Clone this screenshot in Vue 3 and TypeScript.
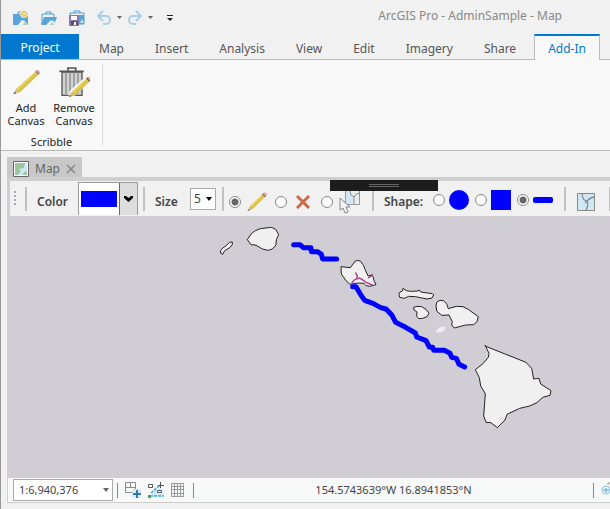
<script setup lang="ts">
import { ref } from 'vue'

const tabs: string[] = ['Map', 'Insert', 'Analysis', 'View', 'Edit', 'Imagery', 'Share', 'Add-In']
const activeTab = ref('Add-In')
const tool = ref('draw')
const shape = ref('line')
const size = ref('5')
const scale = ref('1:6,940,376')
</script>

<template>
  <div class="app">
    <header class="title-bar">
      <div class="quick">
        <button class="icon-btn" aria-label="New project">
          <svg width="16" height="16" viewBox="0 0 16 16">
            <path d="M5 4V2h5v2" fill="none" stroke="#4a9fd4" />
            <path d="M0 4h15v11H0z" fill="#57a5d8" />
            <path d="M5 15l4-5 3 1 3 4z" fill="#e8f3ee" /><path d="M10 15l2-4 3 4z" fill="#a9cfb4" />
            <circle cx="11" cy="4" r="4" fill="#f1f1f1" />
            <path d="M11 0v8M7 4h8M8 1l6 6M14 1L8 7" stroke="#dfc04c" />
            <circle cx="11" cy="4" r="2" fill="#f8ebac" stroke="#d9b740" />
          </svg>
        </button>
        <button class="icon-btn" aria-label="Open project">
          <svg width="16" height="16" viewBox="0 0 16 16">
            <path d="M5 4V2h5v2M1 14V4h12v3" fill="none" stroke="#4a9fd4" />
            <path d="M0 15L3 7h13l-3 8z" fill="#57a5d8" />
            <path d="M5 15l5-5 2 1 2 1-1 3z" fill="#e8f3ee" /><path d="M9 15l2-3 2 3z" fill="#a9cfb4" />
          </svg>
        </button>
        <button class="icon-btn" aria-label="Save project">
          <svg width="16" height="16" viewBox="0 0 16 16">
            <path d="M5 3V1h6v2M1 6V3h14v11h-5" fill="none" stroke="#4a9fd4" />
            <path d="M10 5h5v9h-5z" fill="#57a5d8" /><path d="M11 13l2-4 2 4z" fill="#c6e0c9" />
            <path d="M0 5h10v11H0z" fill="#8f73b5" />
            <path d="M2 6h6v4H2z" fill="#fff" /><path d="M2 11h7v4H2z" fill="#555" /><path d="M5 12h2v3H5z" fill="#fff" />
          </svg>
        </button>
        <button class="icon-btn wide" aria-label="Undo">
          <svg width="26" height="16" viewBox="0 0 26 16">
            <path d="M6 1L1 6l5 5M1 6h8a4 4 0 0 1 0 8H6" fill="none" stroke="#a9cfe8" stroke-width="2" />
            <path d="M20 6h5l-2.500 3z" fill="#666" />
          </svg>
        </button>
        <button class="icon-btn wide" aria-label="Redo">
          <svg width="26" height="16" viewBox="0 0 26 16">
            <path d="M8 1l5 5-5 5M13 6H5a4 4 0 0 0 0 8h3" fill="none" stroke="#a9cfe8" stroke-width="2" />
            <path d="M20 6h5l-2.500 3z" fill="#666" />
          </svg>
        </button>
        <button class="icon-btn customize" aria-label="Customize quick access">
          <svg width="6" height="8" viewBox="0 0 6 8"><path d="M0 1h6v1H0zM0 4h6L3 7z" fill="#222" /></svg>
        </button>
      </div>
      <div class="title">ArcGIS Pro - AdminSample - Map</div>
    </header>

    <nav class="tabs">
      <button class="project">Project</button>
      <button v-for="t in tabs" :key="t" class="tab" :class="{ active: t === activeTab }" @click="activeTab = t">{{ t }}</button>
    </nav>

    <section class="ribbon">
      <div class="group">
        <div class="commands">
          <button class="command">
            <svg width="32" height="34" viewBox="0 0 96 102">
              <g transform="translate(-27 -6)">
                <path d="M39 94l7-14 57-51 9 9-55 53z" fill="#d9c04a" />
                <path d="M46 80l57-51 3 3-56 54z" fill="#e9d35f" />
                <path d="M39 95l4-12 5 1 5 6z" fill="#d8b9a4" /><path d="M37 97l4-8 5 5z" fill="#555" />
                <path d="M103 29l5-5 9 9-5 5z" fill="#666" /><path d="M107 24q9-2 10 8l-3 4-9-9z" fill="#eda092" />
              </g>
            </svg>
            <span>Add<br />Canvas</span>
          </button>
          <button class="command remove">
            <svg width="32" height="34" viewBox="0 0 96 102">
              <path d="M12 24h60v70H12z" fill="#d2d2d2" stroke="#555" stroke-width="4" />
              <path d="M24 26v64M36 26v64M48 26v64M60 26v64" stroke="#999" stroke-width="5" />
              <path d="M4 22h73" stroke="#555" stroke-width="5" /><path d="M30 20v-8h23v8" fill="none" stroke="#555" stroke-width="5" />
              <path d="M30 101l5-20 50-45 16 12-54 50z" fill="#f8f8f8" />
              <path d="M34 98l7-14 46-42 9 9-44 43z" fill="#d9c04a" />
              <path d="M41 84l46-42 3 3-44 43z" fill="#e9d35f" />
              <path d="M34 98l5-12 9 9z" fill="#d8b9a4" /><path d="M32 99l4-7 4 4z" fill="#555" />
              <path d="M85 44l4-5 10 9-5 5z" fill="#555" /><path d="M89 39q9-3 11 7l-4 4-8-8z" fill="#eda092" />
            </svg>
            <span>Remove<br />Canvas</span>
          </button>
        </div>
        <div class="group-name">Scribble</div>
      </div>
    </section>

    <main class="document">
      <div class="doc-tab">
        <svg width="16" height="16" viewBox="0 0 16 16">
          <path d="M.5.500h15v15H.5z" fill="#fff" stroke="#666" />
          <path d="M2 2h12v12H2z" fill="#9cc6a0" /><path d="M14 2v8l-3 1-1 3H5l3-4-2-2 5-1 1-5z" fill="#cfe8f8" />
        </svg>
        <span>Map</span>
        <button class="icon-btn" aria-label="Close Map">
          <svg width="10" height="10" viewBox="0 0 10 10"><path d="M1 1l8 8M9 1L1 9" stroke="#888" stroke-width="1.500" /></svg>
        </button>
      </div>

      <div class="view">
        <div class="toolbar">
          <span class="grip"></span>
          <i class="sep"></i>
          <span id="color-label" class="label color-label">Color</span>
          <button class="color-picker" aria-labelledby="color-label" aria-haspopup="listbox">
            <span class="swatch"></span>
            <span class="drop"><svg width="9" height="6" viewBox="0 0 9 6"><path d="M0 0h2l2.500 2L7 0h2v2L4.500 6 0 2z" /></svg></span>
          </button>
          <i class="sep after-color"></i>
          <label class="label size-label" for="size">Size</label>
          <span class="select-wrap size-wrap">
            <select id="size" v-model="size"><option>5</option><option>8</option></select>
            <svg width="6" height="4" viewBox="0 0 6 4"><path d="M0 0h6L3 4z" /></svg>
          </span>
          <i class="sep after-size"></i>

          <div class="tools">
            <label class="choice">
              <input v-model="tool" type="radio" name="tool" value="draw" aria-label="Draw" />
              <svg width="20" height="20" viewBox="0 0 60 60">
                <path d="M3 55l6-12L48 5l8 8-39 38z" fill="#d9c04a" /><path d="M9 43L48 5l3 3-38 38z" fill="#e9d35f" />
                <path d="M3 56l5-10 7 6z" fill="#d8b9a4" /><path d="M1 57l4-6 3 3z" fill="#555" />
                <path d="M45 7l4-4 9 9-4 4z" fill="#666" /><path d="M50 2q10-2 10 8l-4 4-8-8z" fill="#eda092" />
              </svg>
            </label>
            <label class="choice erase">
              <input v-model="tool" type="radio" name="tool" value="erase" aria-label="Erase" />
              <svg width="14" height="14" viewBox="0 0 14 14"><path d="M1 1l12 12M13 1L1 13" stroke="#cf6a48" stroke-width="3" /></svg>
            </label>
            <label class="choice select">
              <input v-model="tool" type="radio" name="tool" value="select" aria-label="Select" />
              <svg width="16" height="18" viewBox="0 0 16 18">
                <path d="M.5.500h14v16H.5z" fill="#ececec" stroke="#999" /><path d="M1 1h5v8l3 2-3 5H1z" fill="#cfe8f8" />
                <path d="M5 3q0 5 4 6v7M9 9q2-4 6-4" fill="none" stroke="#888" />
              </svg>
            </label>
          </div>
          <i class="sep before-shape"></i>

          <span class="label shape-label">Shape:</span>
          <div class="shapes">
            <label class="choice shape">
              <input v-model="shape" type="radio" name="shape" value="circle" aria-label="Circle" />
              <svg width="20" height="20" viewBox="0 0 20 20"><circle cx="10" cy="10" r="10" fill="#00f" /></svg>
            </label>
            <label class="choice shape">
              <input v-model="shape" type="radio" name="shape" value="square" aria-label="Square" />
              <svg width="20" height="20" viewBox="0 0 20 20"><path d="M0 0h20v20H0z" fill="#00f" /></svg>
            </label>
            <label class="choice shape">
              <input v-model="shape" type="radio" name="shape" value="line" aria-label="Line" />
              <svg width="20" height="20" viewBox="0 0 20 20"><rect y="7" width="20" height="6" rx="2" fill="#00f" /></svg>
            </label>
          </div>
          <i class="sep after-shape"></i>
          <button class="icon-btn map-btn" aria-label="Map">
            <svg width="19" height="18" viewBox="0 0 19 18">
              <path d="M.5.500h17v17H.5z" fill="#cfe8f8" stroke="#888" />
              <path d="M5 1q1 7 5 7 4-4 8-4M10 8q2 4-1 9M10 8l-2 2" fill="none" stroke="#888" stroke-width="1.300" />
            </svg>
          </button>
          <i class="sep last"></i>
          <span class="handle"></span>
          <svg class="pointer" width="12" height="17" viewBox="0 0 12 17">
            <path d="M1 1v12l3-2 2 5 3-1-2-5h4z" fill="#f4f4f4" stroke="#888" />
          </svg>
        </div>

        <div class="map-canvas">
          <svg viewBox="0 0 1809 786" preserveAspectRatio="xMinYMin slice" role="img" aria-label="Map of Hawaii">
            <g class="islands">
              <g transform="translate(609 6)">
                <path d="M67 72l-9 1-8 9-12 8-6 7v9l6 3 6-11 14-8 9-10z" />
                <path d="M112 65l12-18 12-9 15-6 33-4 13 6 9 16-7 15-1 16-11 12-12 4-18-4-15-9-10-4-8 1z" />
              </g>
              <g transform="translate(969 87)">
                <path d="M33 65l28 3 14-19 8-3 9 3 9 13 5 13 8 18 12-3 3 5 3 12 6 12-19 5-11-2-6-7-17-1-17 2-8 2-12-11-14-20z" />
                <path d="M209 142l8-4 2-8 10 7 13 2 22-1 4-3 4 6 35 5 4 4-5 9-15 3-35-7-20-1-13 6-14-3-2-9z" />
                <path d="M251 187l10-3 14 1 13 8 9 12-6 10-13 5-12 1-6-7 1-13-9-6z" />
                <path d="M318 183l2-11 10-6 10 1 10 9 5 15 24-7 20 1 14 7 32 23-4 15-10 9-24 1-34 9-8-9 2-10-10-20-22 1-15-13z" />
              </g>
              <g transform="translate(1359 357)">
                <path d="M80 35l118 47 17 18 6 32 8-1 8-1 5 17 31 20-3 14-22 6-17 16-22 10-30 7-38 18-6 17-23 23-14-11-5-4-15-1-7-19 5-67-14-23-4-25-12-24 23-18 16-19 2-12-12-25z" />
              </g>
            </g>
            <path d="M1287 344l12-10 16-2-2 10-10 6-14 2z" fill="#eee" />
            <path d="M1034 200l8-8 15-6 9 5 14 10 14 5 5 4M1045 170l6 9-2 8M1083 186l9-5 5-6" fill="none" stroke="#a63483" stroke-width="4" />
            <g class="scribble">
              <path transform="translate(609 6)" d="M251 80h19l10 9h23l1 12h19l11 8 4 14h42" />
              <path transform="translate(969 87)" d="M68 125h10l16 27 10 14 25 9 23 13 16 4 18 19 11 21 30 15 29 17 4 12 28 11 10 19 10 1 3 9h32l17 9 5 12 14 3 8 18 17 8" />
            </g>
          </svg>
        </div>

        <footer class="status">
          <span class="select-wrap scale-wrap">
            <select v-model="scale" aria-label="Map scale"><option>1:6,940,376</option><option>1:1,000,000</option></select>
            <svg width="6" height="4" viewBox="0 0 6 4"><path d="M0 0h6L3 4z" fill="#666" /></svg>
          </span>
          <i class="bar"></i>
          <button class="icon-btn" aria-label="Constraints">
            <svg width="16" height="16" viewBox="0 0 16 16">
              <path d="M.5.500h10v10H.5zM.500 5.500h10M5.500.500v5" fill="none" stroke="#888" />
              <path d="M7 7h9v9H7z" fill="#d5ebf8" /><path d="M12 8v8M8 12h8" stroke="#3977a8" stroke-width="2" />
            </svg>
          </button>
          <button class="icon-btn" aria-label="Snapping">
            <svg width="16" height="16" viewBox="0 0 16 16">
              <path d="M4 10l9-4 3 8H4z" fill="#cde8f8" /><path d="M2 14h14M3 11l9-8" stroke="#46a5d9" stroke-width="1.500" stroke-dasharray="3 1" fill="none" />
              <path d="M.5 2.500h4v3h-4zM9.500 8.500h4v2h-4z" fill="#fff" stroke="#555" />
              <path d="M12.500 0v6M10 3.500h6" stroke="#555" />
              <path d="M0 13h3v3H0z" fill="#4d9d5b" />
            </svg>
          </button>
          <button class="icon-btn" aria-label="Grid">
            <svg width="13" height="14" viewBox="0 0 13 14"><path d="M.5.500h12v13H.5zM3.500 0v14M6.500 0v14M9.500 0v14M0 3.500h13M0 6.500h13M0 10.500h13" fill="none" stroke="#999" /></svg>
          </button>
          <i class="bar second"></i>
          <output class="coordinates">154.5743639°W 16.8941853°N</output>
          <i class="bar"></i>
          <button class="icon-btn zoom-btn" aria-label="Zoom to selection">
            <svg width="9" height="16" viewBox="0 0 9 16">
              <circle cx="5" cy="8" r="4" fill="#edf7fc" stroke="#8dc2df" /><path d="M5 6v5M2 8h6" stroke="#619fc2" /><path d="M7 3V1h2" fill="none" stroke="#999" />
            </svg>
          </button>
        </footer>
      </div>
    </main>
  </div>
</template>

<style>
body {
  background: #f1f1f1;
}
</style>

<style scoped>
* {
  box-sizing: border-box;
}
.app {
  min-height: 100vh;
  display: flex;
  flex-direction: column;
  overflow: hidden;
  border-left: 1px solid #999;
  background: #f1f1f1;
  color: #444;
  font: 12px/16px "Noto Sans", sans-serif;
}
button,
select {
  font: inherit;
  color: inherit;
  border: 0;
  padding: 0;
  margin: 0;
  background: none;
}
svg {
  display: block;
  flex: none;
}
.icon-btn {
  display: flex;
  align-items: center;
  flex: none;
}
.title-bar {
  display: flex;
  height: 34px;
  justify-content: space-between;
}
.quick {
  display: flex;
  align-items: center;
  gap: 12px;
  padding: 2px 0 0 12px;
}
.quick .wide {
  margin-right: -7px;
}
.quick .customize {
  margin-left: 8px;
}
.title {
  padding: 8px 48px 0 0;
  color: #888;
  white-space: nowrap;
}
.tabs {
  display: flex;
  gap: 1px;
  height: 26px;
  border-bottom: 1px solid #bbb;
}
.project {
  width: 78px;
  height: 25px;
  margin-right: 4px;
  padding-top: 3px;
  background: #0078d0;
  color: #fff;
}
.tab {
  padding: 3px 15px 0;
  height: 26px;
  color: #555;
  white-space: nowrap;
}
.tab.active {
  margin: 0 2px;
  padding: 1px 13px 0;
  background: #f8f8f8;
  color: #0078d0;
  border: 1px solid #bbb;
  border-top: 2px solid #0078d0;
  border-bottom: 0;
}
.ribbon {
  display: flex;
  height: 91px;
  padding: 4px 0;
  background: #f8f8f8;
  border-bottom: 1px solid #bbb;
  color: #222;
}
.group {
  width: 102px;
  border-right: 1px solid #ddd;
}
.commands {
  display: flex;
  padding-left: 1px;
}
.command {
  width: 48px;
  height: 70px;
  display: flex;
  flex-direction: column;
  align-items: center;
  gap: 3px;
  font-size: 11px;
  line-height: 13px;
}
.group-name {
  text-align: center;
  font-size: 11px;
  line-height: 16px;
}
.document {
  flex: 1;
  display: flex;
  flex-direction: column;
  padding: 6px 0 6px 6px;
}
.doc-tab {
  align-self: flex-start;
  width: 75px;
  height: 20px;
  padding: 3px 6px 0 6px;
  display: flex;
  align-items: center;
  justify-content: space-between;
  background: #c8c8c8;
  color: #666;
}
.view {
  flex: 1;
  display: flex;
  flex-direction: column;
  border-top: 4px solid #cfcfcf;
  background: #d0ced4;
}
.toolbar {
  position: relative;
  display: flex;
  align-items: center;
  height: 35px;
  margin-left: 3px;
  padding-left: 4px;
  background: #f1f1f1;
}
.toolbar > * {
  flex: none;
}
.grip {
  width: 2px;
  height: 15px;
  margin-right: 9px;
  background: repeating-linear-gradient(#aaa 0 2px, transparent 2px 4px);
}
.sep {
  width: 2px;
  height: 24px;
  background: #c0c0c0;
}
.label {
  font-weight: 600;
  white-space: nowrap;
  padding-top: 6px;
}
.color-label {
  width: 51px;
  padding-left: 10px;
}
.color-picker {
  display: flex;
  width: 60px;
  height: 33px;
  background: #fff;
  border: 1px solid #999;
  border-bottom: 0;
}
.swatch {
  width: 36px;
  height: 16px;
  margin: 8px 2px;
  background: #00f;
}
.drop {
  flex: 1;
  height: 32px;
  display: flex;
  align-items: center;
  justify-content: center;
  background: #ddd;
  border-left: 1px solid #666;
}
.after-color {
  margin-left: 5px;
}
.size-label {
  width: 45px;
  padding-left: 10px;
}
.select-wrap {
  position: relative;
  display: flex;
  background: #fff;
  border: 1px solid #aaa;
}
.select-wrap select {
  appearance: none;
  width: 100%;
  padding: 0 3px;
}
.select-wrap svg {
  position: absolute;
  right: 3px;
  top: 50%;
  margin-top: -2px;
  pointer-events: none;
}
.size-wrap {
  width: 26px;
  height: 22px;
}
.after-size {
  margin-left: 6px;
}
.tools,
.shapes {
  display: flex;
  align-items: center;
}
.tools {
  width: 148px;
  padding: 6px 0 0 5px;
}
.choice {
  display: flex;
  align-items: center;
  gap: 6px;
  margin-right: 8px;
}
.erase {
  gap: 9px;
  margin-right: 11px;
}
.select {
  gap: 12px;
  margin-right: 0;
}
.select svg {
  margin-top: -10px;
}
.choice input {
  appearance: none;
  width: 12px;
  height: 12px;
  margin: 0;
  flex: none;
  border: 1px solid #888;
  border-radius: 50%;
  background: #fff;
}
.choice input:checked {
  background: radial-gradient(circle, #666 0 3px, #fff 4px);
}
.shape-label {
  width: 59px;
  padding-left: 10px;
}
.shapes {
  padding-top: 3px;
}
.shape {
  gap: 4px;
  margin-right: 6px;
}
.after-shape {
  margin-left: 5px;
}
.map-btn {
  margin: 6px 13px 0 11px;
}
.handle {
  position: absolute;
  left: 320px;
  top: -1px;
  width: 108px;
  height: 11px;
  border: solid #1c1c1c;
  border-width: 4px 39px;
  background: linear-gradient(#666 0 1px, #1c1c1c 1px 2px, #666 2px);
}
.pointer {
  position: absolute;
  left: 329px;
  top: 16px;
}
.map-canvas {
  flex: 1 0 262px;
  overflow: hidden;
}
.map-canvas svg {
  width: 100%;
}
.islands path {
  fill: #f0f0f0;
  stroke: #222;
  stroke-width: 3;
  stroke-linejoin: round;
}
.scribble path {
  fill: none;
  stroke: #00f;
  stroke-width: 15;
  stroke-linecap: round;
  stroke-linejoin: round;
}
.status {
  display: flex;
  align-items: center;
  height: 25px;
  margin-left: 1px;
  padding-left: 5px;
  gap: 7px;
  font-size: 11px;
  background: #f7f8f8;
  border-bottom: 1px solid #ccc;
}
.scale-wrap {
  width: 100px;
  height: 22px;
  margin-right: -3px;
}
.scale-wrap select {
  padding: 0 5px;
}
.bar {
  width: 1px;
  height: 15px;
  background: #888;
}
.second {
  margin-left: 2px;
}
.coordinates {
  flex: 1;
  text-align: center;
  white-space: nowrap;
}
</style>
